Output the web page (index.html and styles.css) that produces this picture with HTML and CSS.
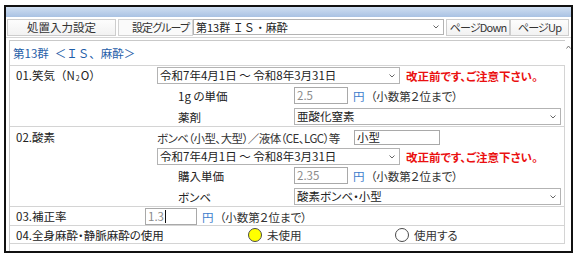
FILE: index.html
```html
<!DOCTYPE html>
<html lang="ja">
<head>
<meta charset="utf-8">
<title>処置入力設定</title>
<link rel="stylesheet" href="styles.css">
</head>
<body>
<div class="window">
  <div class="titlebar"></div>
  <div class="toolbar">
    <button class="tbtn btn-main">処置入力設定</button>
    <div class="group-label">設定グループ</div>
    <div class="select group-select"><span class="nopalt">第13群 ＩＳ・麻酔</span><svg class="chev" width="6" height="4" viewBox="0 0 6 4"><path d="M0.5 0.5 L3 3 L5.5 0.5" fill="none" stroke="#666" stroke-width="1"/></svg></div>
    <button class="tbtn btn-down">ページDown</button>
    <button class="tbtn btn-up">ページUp</button>
  </div>
  <div class="panel">
    <div class="content">
      <div class="heading">第13群<span class="hgroup">＜ＩＳ、麻酔＞</span></div>
      <div class="table">
        <div class="row row1">
          <div class="label nopalt">01.笑気（N<span class="sub2">2</span>O）</div>
          <div class="body">
            <div class="line">
              <div class="select date"><span>令和7年4月1日 ～ 令和8年3月31日</span><svg class="chev" width="6" height="4" viewBox="0 0 6 4"><path d="M0.5 0.5 L3 3 L5.5 0.5" fill="none" stroke="#666" stroke-width="1"/></svg></div>
              <span class="note">改正前です、ご注意下さい。</span>
            </div>
            <div class="line sub gap3">
              <span class="sublabel">1g の単価</span>
              <div class="input price">2.5</div>
              <span class="yen">円</span>
              <span class="hint">（小数第２位まで）</span>
            </div>
            <div class="line sub gap4">
              <span class="sublabel">薬剤</span>
              <div class="select wide"><span>亜酸化窒素</span><svg class="chev" width="6" height="4" viewBox="0 0 6 4"><path d="M0.5 0.5 L3 3 L5.5 0.5" fill="none" stroke="#666" stroke-width="1"/></svg></div>
            </div>
          </div>
        </div>
        <div class="row row2">
          <div class="label">02.酸素</div>
          <div class="body">
            <div class="line">
              <span class="desc">ボンベ（小型、大型）／液体（CE、LGC）等</span>
              <div class="input kind">小型</div>
            </div>
            <div class="line gap2">
              <div class="select date"><span>令和7年4月1日 ～ 令和8年3月31日</span><svg class="chev" width="6" height="4" viewBox="0 0 6 4"><path d="M0.5 0.5 L3 3 L5.5 0.5" fill="none" stroke="#666" stroke-width="1"/></svg></div>
              <span class="note">改正前です、ご注意下さい。</span>
            </div>
            <div class="line sub gap2">
              <span class="sublabel">購入単価</span>
              <div class="input price">2.35</div>
              <span class="yen">円</span>
              <span class="hint">（小数第２位まで）</span>
            </div>
            <div class="line sub gap4">
              <span class="sublabel">ボンベ</span>
              <div class="select wide"><span>酸素ボンベ・小型</span><svg class="chev" width="6" height="4" viewBox="0 0 6 4"><path d="M0.5 0.5 L3 3 L5.5 0.5" fill="none" stroke="#666" stroke-width="1"/></svg></div>
            </div>
          </div>
        </div>
        <div class="row row3">
          <div class="label label3">03.補正率</div>
          <div class="input rate">1.3<span class="caret"></span></div>
          <span class="yen">円</span>
          <span class="hint">（小数第２位まで）</span>
        </div>
        <div class="row row4">
          <div class="label label4">04.全身麻酔・静脈麻酔の使用</div>
          <label class="option opt-off"><span class="radio on"></span><span class="rlabel">未使用</span></label>
          <label class="option"><span class="radio off"></span><span class="rlabel">使用する</span></label>
        </div>
      </div>
    </div>
    <div class="scrollbar"><svg width="5" height="4" viewBox="0 0 5 4"><path d="M0.5 3.5 L2.5 1 L4.5 3.5" fill="none" stroke="#777" stroke-width="1"/></svg></div>
  </div>
</div>
</body>
</html>
```

FILE: styles.css
```css
* { box-sizing: border-box; }
html, body { margin: 0; padding: 0; background: #fff; }
body {
  padding: 5px 0 0 4px;
  font-family: "Noto Sans CJK JP", "Noto Sans", sans-serif;
  font-size: 11.5px;
  color: #222;
  font-feature-settings: "palt";
}
.nopalt { font-feature-settings: normal; }
.window {
  width: 569px;
  height: 248px;
  border: 2px solid #111;
  display: flex;
  flex-direction: column;
  background: #fff;
}
.titlebar {
  height: 10px;
  flex: none;
  background: linear-gradient(#cfdef1, #a9c2e3);
}
.toolbar {
  height: 21px;
  flex: none;
  display: flex;
  align-items: flex-start;
  padding: 2px 0 0 1px;
  border-bottom: 1px solid #d6d6d6;
  white-space: nowrap;
  font-size: 11px;
}
.tbtn {
  font-family: inherit;
  font-size: 11px;
  font-feature-settings: "palt";
  color: #333;
  height: 17px;
  padding: 0;
  line-height: 15px;
  background: linear-gradient(#fdfdfd, #f2f2f2);
  border: 1px solid #cdcdcd;
  text-align: center;
  white-space: nowrap;
  overflow: visible;
}
.btn-main { width: 109px; font-size: 11.5px; }
.group-label {
  width: 75px;
  height: 17px;
  margin-left: 2px;
  line-height: 15px;
  padding-left: 13px;
  border: 1px solid #d3d3d3;
  color: #333;
  background: #fafafa;
  white-space: nowrap;
  letter-spacing: -0.9px;
  overflow: hidden;
}
.select {
  display: flex;
  align-items: center;
  justify-content: space-between;
  height: 17px;
  border: 1px solid #b3b3b3;
  background: #fff;
  padding: 0 4px 0 2px;
  white-space: nowrap;
  line-height: 15px;
}
.group-select { width: 251px; height: 16px; }
.btn-down { width: 64px; margin-left: 2px; letter-spacing: -0.8px; }
.btn-up { width: 59px; letter-spacing: -0.8px; }

.panel {
  flex: 1;
  display: flex;
  margin: 2px 0 0 3px;
}
.content {
  flex: 1;
  border-left: 1px solid #c9c9c9;
  border-top: 1px solid #c9c9c9;
}
.scrollbar {
  width: 6px;
  flex: none;
  padding-top: 5px;
  display: flex;
  justify-content: center;
  align-items: flex-start;
}
.heading {
  height: 24px;
  padding: 4px 0 0 3px;
  line-height: 16px;
  color: #1f5ea8;
  font-feature-settings: normal;
  font-size: 11.5px;
}
.hgroup { margin-left: 6px; }
.table {
  border-top: 1px solid #d4d4d4;
}
.row {
  border-right: 1px solid #d4d4d4;
  border-bottom: 1px solid #d4d4d4;
  display: flex;
  align-items: flex-start;
}
.row1 { padding: 1px 0 1px; }
.row2 { padding: 2px 0 1px; }
.row3 { padding: 1px 0 0; align-items: center; }
.row4 { padding: 1px 0 0; height: 18px; align-items: center; }
.label {
  width: 147px;
  flex: none;
  padding-left: 6px;
  line-height: 17px;
  white-space: nowrap;
}
.sub2 { font-size: 7px; vertical-align: -1px; margin: 0 1px; }
.label3 { width: 135px; }
.label4 { width: 238px; }
.body { flex: 1; display: flex; flex-direction: column; }
.line { display: flex; align-items: center; height: 17px; white-space: nowrap; }
.gap2 { margin-top: 2px; }
.gap3 { margin-top: 3px; }
.gap4 { margin-top: 4px; }
.sub { padding-left: 21px; }
.sublabel { width: 116px; flex: none; }
.date { width: 243px; }
.wide { width: 267px; }
.note {
  margin-left: 6px;
  color: #ea1010;
  font-weight: bold;
}
.input {
  height: 17px;
  border: 1px solid #a9a9a9;
  background: #fff;
  padding-left: 2px;
  line-height: 15px;
  color: #8a8a8a;
}
.price { width: 54px; }
.kind { width: 86px; height: 15px; line-height: 13px; margin-left: 10px; color: #222; }
.desc { color: #333; width: 187px; letter-spacing: -0.55px; }
.rate { width: 52px; display: flex; align-items: center; }
.caret { display: inline-block; width: 1px; height: 13px; background: #111; margin-left: 1px; }
.yen { color: #3c7dcc; margin-left: 5px; }
.hint { margin-left: 6px; color: #333; }
.option { display: flex; align-items: center; }
.opt-off { width: 147px; }
.radio {
  width: 14px;
  height: 14px;
  border-radius: 50%;
  border: 1px solid #4a4a4a;
  flex: none;
}
.radio.on { background: #ffff00; }
.radio.off { background: #fff; }
.rlabel { margin-left: 5px; color: #333; }
```
